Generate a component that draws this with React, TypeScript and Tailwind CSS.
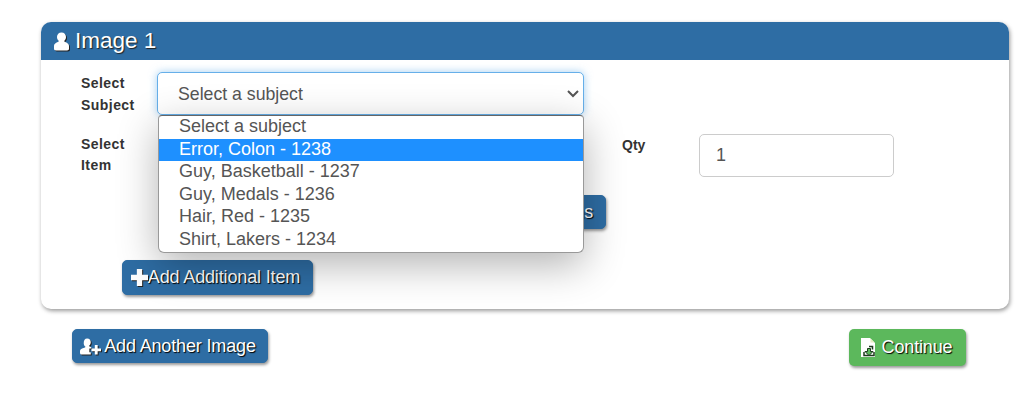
const SHADOW_TEXT = '[text-shadow:1px_1px_1px_#000]'

function UserIcon({ className }: { className?: string }) {
  return (
    <svg viewBox="0 0 16 19" className={className} fill="currentColor">
      <path d="M8 0c2.900 0 4.800 2 4.800 4.800 0 1.700-.8 3.100-1.700 3.900-.3.300-.2.800.2 1l1.900.9c1.700.8 2.800 2 2.800 3.700v2.900c0 1-.9 1.800-2 1.800H2c-1.100 0-2-.8-2-1.800v-2.900c0-1.700 1.100-2.900 2.800-3.700l1.900-.9c.4-.2.500-.7.200-1-.9-.8-1.700-2.200-1.700-3.900C3.200 2 5.100 0 8 0z" />
    </svg>
  )
}

function PlusIcon({ className }: { className?: string }) {
  return (
    <svg viewBox="0 0 16 16" className={className} fill="currentColor">
      <path d="M5.500 0h5v5.500H16v5h-5.500V16h-5v-5.500H0v-5h5.500z" />
    </svg>
  )
}

function UserAddIcon({ className }: { className?: string }) {
  return (
    <svg viewBox="0 0 22 17" className={className} fill="currentColor">
      <path d="M7.500 0c2.400 0 3.800 1.700 3.800 4 0 1.500-.7 2.700-1.500 3.400-.4.400-.3.900.2 1.100l1.800.9v1.100h-2v4h1.500V17H2c-1.100 0-2-.8-2-1.700v-1.800c0-1.400.9-2.400 2.200-2.900l3-1.100c.5-.2.600-.7.200-1.100-.8-.7-1.500-1.900-1.500-3.400C3.900 1.700 5.100 0 7.500 0z" />
      <path d="M15.500 7h3v3.500H22v3h-3.500V17h-3v-3.500H12v-3h3.500z" />
    </svg>
  )
}

function SaveFileIcon({ className }: { className?: string }) {
  return (
    <svg viewBox="0 0 15 19" className={className}>
      <path fill="#fff" d="M0 0h9l5 5v14H0z" />
      <path fill="#e8ecc0" d="M9.500 0.500l4 4h-4z" />
      <path fill="none" stroke="#1c3a1c" strokeWidth="1.500" d="M8 8.500h3.500v3M3 14v3.500h10V14" />
      <path fill="#5cb85c" stroke="#1c3a1c" strokeWidth="1" d="M6.500 10.500h3v3h2.500l-4 4-4-4h2.500z" />
    </svg>
  )
}

function Button({
  className,
  children,
}: {
  className: string
  children: React.ReactNode
}) {
  return (
    <button
      className={`flex items-center justify-center rounded-[5px] border border-[#2e6da4] bg-[#2e6da4] text-[18px] tracking-[-0.15px] text-white shadow-[1px_2px_3px_rgba(0,0,0,0.4)] ${SHADOW_TEXT} ${className}`}
    >
      {children}
    </button>
  )
}

const OPTIONS = [
  'Select a subject',
  'Error, Colon - 1238',
  'Guy, Basketball - 1237',
  'Guy, Medals - 1236',
  'Hair, Red - 1235',
  'Shirt, Lakers - 1234',
]

export default function App() {
  return (
    <div className="h-[410px] w-[1020px] overflow-hidden bg-white pl-[41px] pt-[22px] font-['Liberation_Sans',Arial,sans-serif] text-[#333]">
      <div className="h-[287px] w-[968px] rounded-[10px] bg-white shadow-[1px_2px_4px_rgba(0,0,0,0.4)]">
        <div className="flex h-[38px] items-center rounded-t-[10px] bg-[#2e6da4] pl-[13px] text-[22.5px] text-white [text-shadow:1px_1px_1px_#222]">
          <UserIcon className="mr-[6px] h-[19px] w-[15px] drop-shadow-[1px_1px_0_#222]" />
          Image 1
        </div>

        <div className="relative flex flex-col pl-[40px] pt-[12px]">
          {/* first row */}
          <div className="flex">
            <label className="w-[76px] text-[14px] font-bold leading-[22px] tracking-[0.45px]">
              Select
              <br />
              Subject
            </label>
            <div className="relative h-[43px] w-[427px]">
              <select className="h-full w-full appearance-none rounded-[5px] border border-[#66afe9] bg-white pl-[20px] pt-[1px] text-[17.7px] text-[#555] shadow-[0_0_8px_rgba(102,175,233,0.6)]">
                <option>Select a subject</option>
              </select>
              <svg viewBox="0 0 12 8" className="absolute right-[5px] top-[18px] h-[8px] w-[12px] text-[#555]" fill="none" stroke="currentColor" strokeWidth="2">
                <path d="M1 1l5 5 5-5" />
              </svg>
            </div>
          </div>

          {/* second row */}
          <div className="mt-[18px] flex">
            <label className="w-[76px] text-[14px] font-bold leading-[21px] tracking-[0.45px]">
              Select
              <br />
              Item
            </label>
            <div className="ml-[1px] h-[43px] w-[426px] rounded-[5px] border border-[#ccc]" />
            <label className="ml-[38px] w-[77px] text-[14px] font-bold leading-[22px]">Qty</label>
            <div className="flex h-[43px] w-[195px] items-center rounded-[5px] border border-[#ccc] pl-[16px] text-[18px] text-[#555]">
              1
            </div>
          </div>

          <div className="mt-[18px] flex h-[34px] w-[525px] justify-end">
            <Button className="w-[120px] justify-end pr-[12px]">Search Items</Button>
          </div>

          <Button className="ml-[41px] mt-[31px] h-[35px] w-[191px] pr-[4px]">
            <PlusIcon className="h-[17px] w-[17px] drop-shadow-[1px_1px_0_#222]" />
            Add Additional Item
          </Button>

          {/* open list of the subject select */}
          <div className="absolute left-[117px] top-[55px] h-[138px] w-[426px] rounded-b-[6px] rounded-t-[4px] border border-[#999] border-t-[#666] bg-white text-[18px] leading-[21px] text-[#555] shadow-[0_12px_40px_rgba(0,0,0,0.3)]">
            {OPTIONS.map((option, i) => (
              <div key={option} className={`h-[22.5px] pl-[20px] ${i === 1 ? 'bg-[#1e90ff] text-white' : ''}`}>
                {option}
              </div>
            ))}
          </div>
        </div>
      </div>

      <div className="ml-[31px] mt-[20px] flex w-[894px] items-start justify-between">
        <Button className="h-[34px] w-[196px] gap-[3px] pr-[4px]">
          <UserAddIcon className="h-[17px] w-[21px] drop-shadow-[1px_1px_0_#222]" />
          Add Another Image
        </Button>
        <button className={`flex h-[37px] w-[117px] items-center justify-center gap-[6px] rounded-[5px] bg-[#5cb85c] pr-[2px] text-[18px] tracking-[-0.15px] text-white shadow-[1px_2px_3px_rgba(0,0,0,0.4)] ${SHADOW_TEXT}`}>
          <SaveFileIcon className="h-[19px] w-[15px]" />
          Continue
        </button>
      </div>
    </div>
  )
}
